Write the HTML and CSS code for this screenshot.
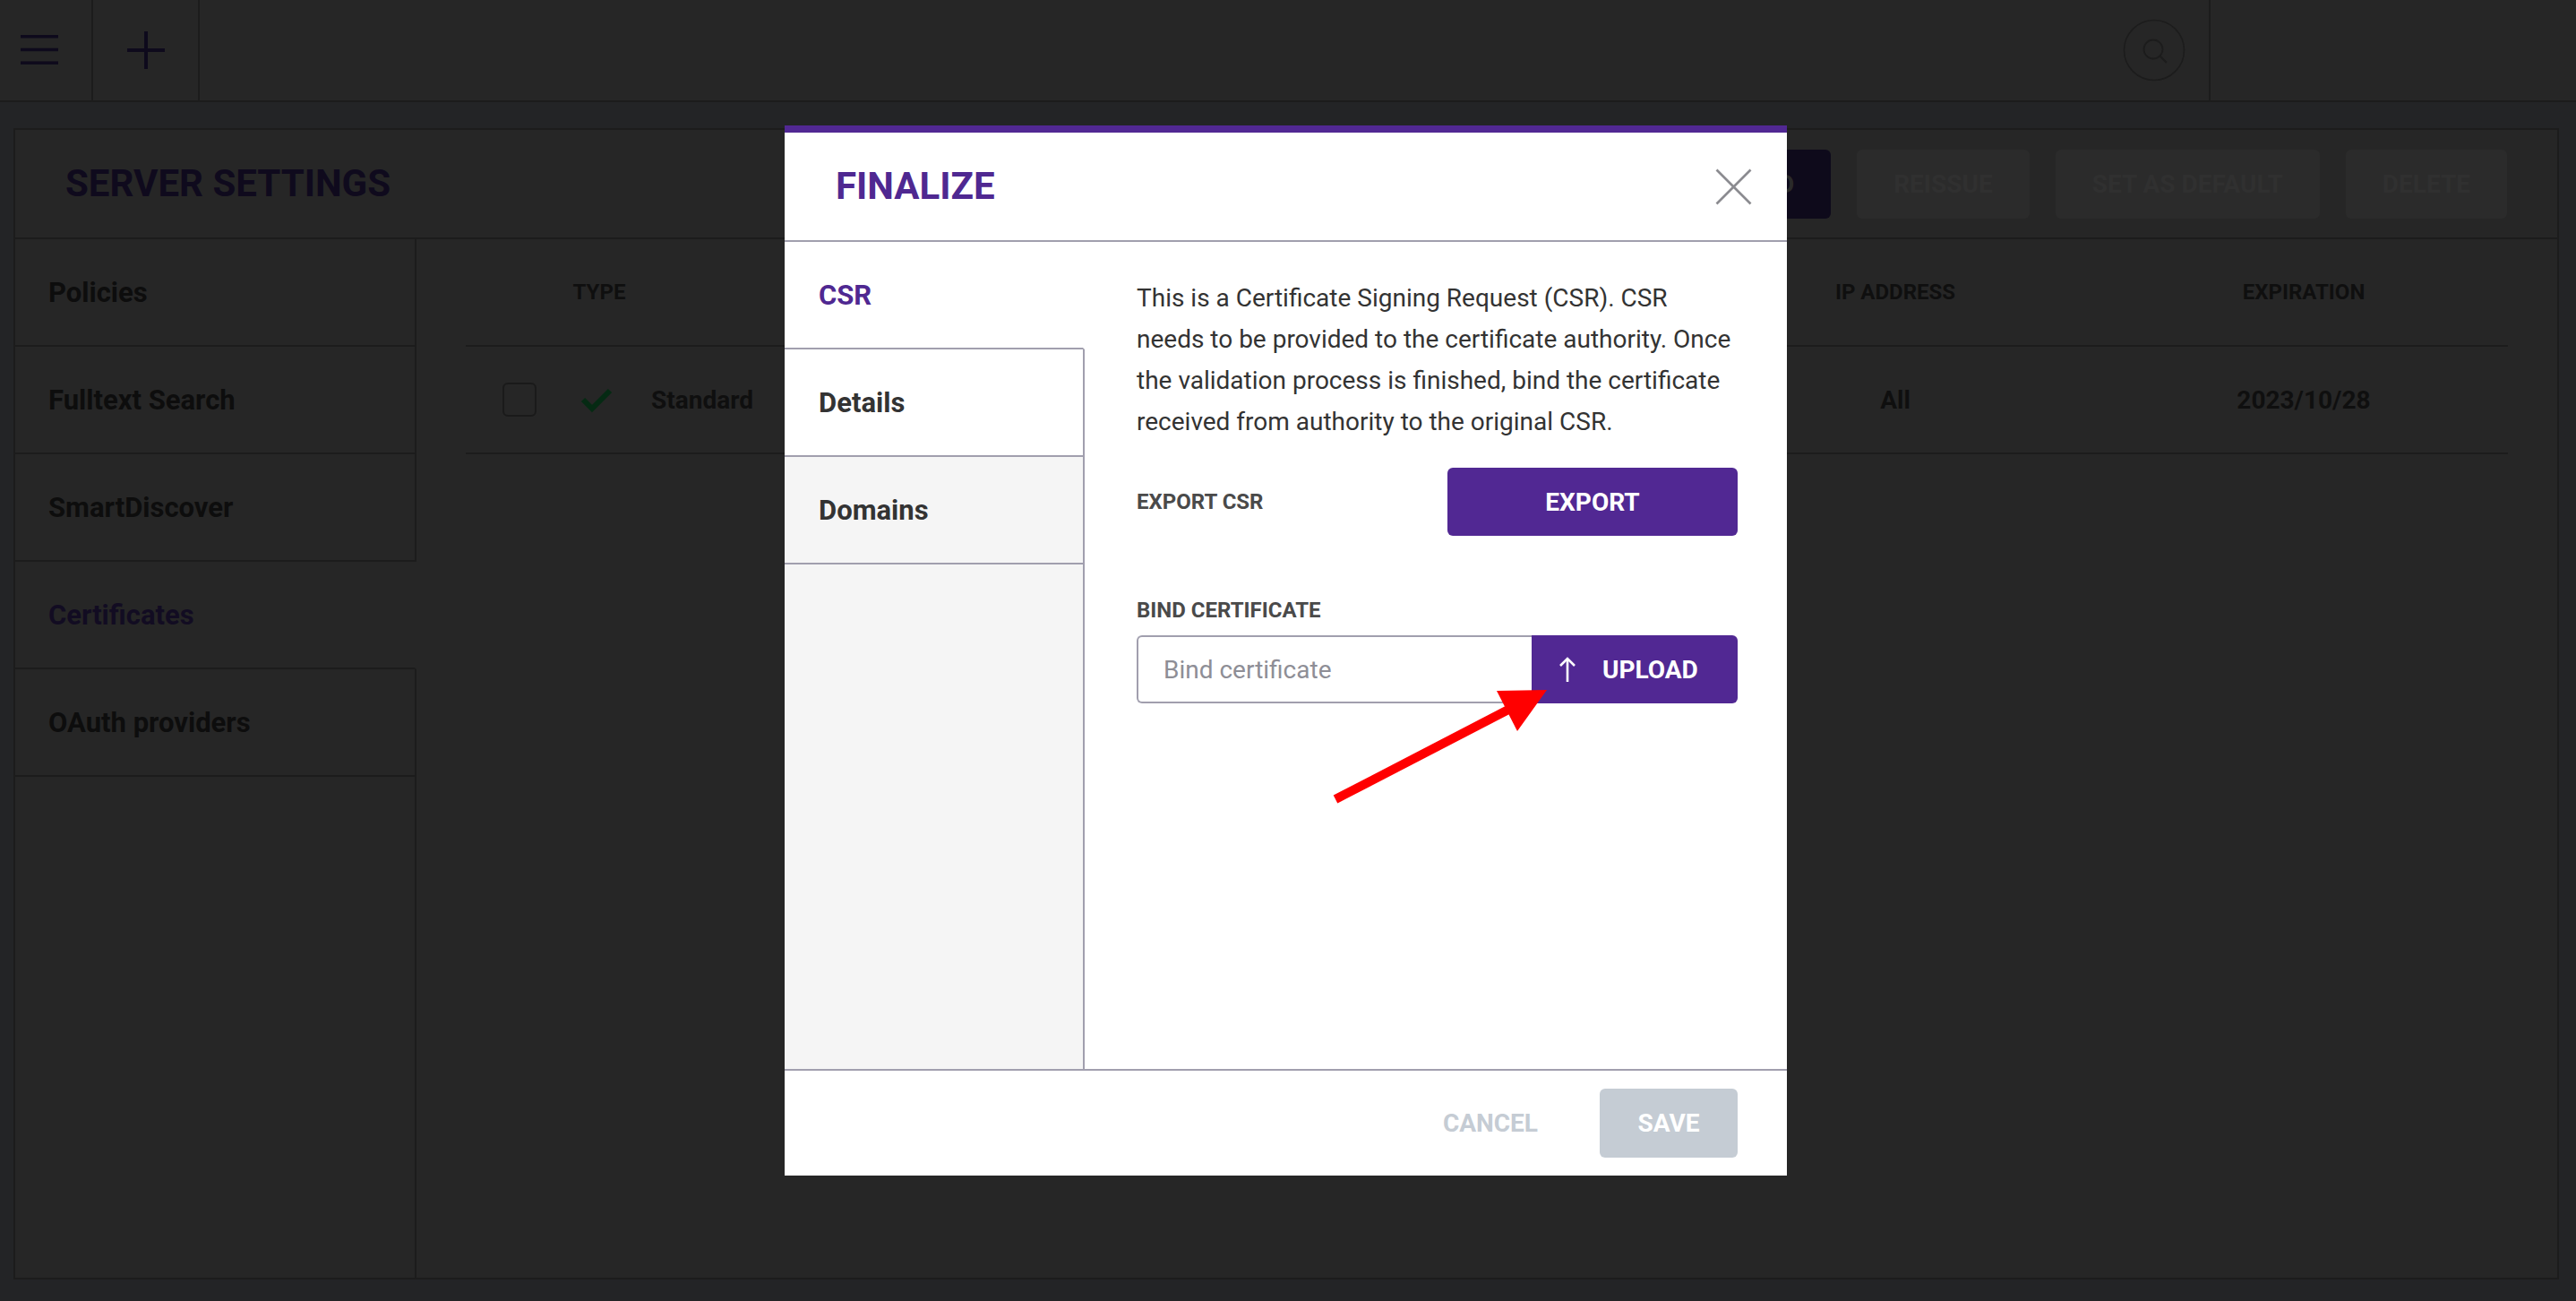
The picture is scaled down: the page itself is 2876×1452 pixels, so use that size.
FILE: index.html
```html
<!DOCTYPE html>
<html lang="en">
<head>
<meta charset="utf-8">
<title>Server Settings - Finalize</title>
<link rel="stylesheet" href="styles.css">
</head>
<body>
<div class="app">
  <header class="topbar">
    <div class="tb-cell tb-menu">
      <svg width="42" height="34" viewBox="0 0 42 34"><rect x="0" y="0" width="42" height="3.5" fill="#0e0a1c"/><rect x="0" y="14.7" width="42" height="3.5" fill="#0e0a1c"/><rect x="0" y="29.4" width="42" height="3.5" fill="#0e0a1c"/></svg>
    </div>
    <div class="tb-cell tb-add">
      <svg width="42" height="42" viewBox="0 0 42 42"><rect x="0" y="19" width="42" height="4" fill="#0e0a1c"/><rect x="19" y="0" width="4" height="42" fill="#0e0a1c"/></svg>
    </div>
    <div class="tb-spacer"></div>
    <div class="tb-cell tb-search">
      <svg width="70" height="70" viewBox="0 0 70 70"><circle cx="35" cy="35" r="33.5" fill="none" stroke="#1c1c1c" stroke-width="1.6"/><circle cx="34" cy="34" r="10.5" fill="none" stroke="#1c1c1c" stroke-width="1.8"/><line x1="41.5" y1="41.5" x2="49" y2="49" stroke="#1c1c1c" stroke-width="2"/></svg>
    </div>
    <div class="tb-right"></div>
  </header>

  <main class="page">
    <section class="panel">
      <div class="panel-head">
        <h1 class="panel-title">SERVER SETTINGS</h1>
        <div class="actions">
          <button class="act act-primary">ADD</button>
          <button class="act">REISSUE</button>
          <button class="act">SET AS DEFAULT</button>
          <button class="act">DELETE</button>
        </div>
      </div>
      <div class="panel-body">
        <nav class="side">
          <div class="side-item">Policies</div>
          <div class="side-item">Fulltext Search</div>
          <div class="side-item">SmartDiscover</div>
          <div class="side-item active">Certificates</div>
          <div class="side-item">OAuth providers</div>
          <div class="side-fill"></div>
        </nav>
        <div class="content">
          <div class="table">
            <div class="trow thead">
              <div class="cell"></div>
              <div class="cell c-center">TYPE</div>
              <div class="cell"></div>
              <div class="cell c-center">IP ADDRESS</div>
              <div class="cell c-center">EXPIRATION</div>
            </div>
            <div class="trow tbody">
              <div class="cell c-box"><span class="checkbox"></span></div>
              <div class="cell c-center">
                <svg class="tick" width="36" height="30" viewBox="0 0 36 30"><polyline points="3,15 13,25 33,5" fill="none" stroke="#052a13" stroke-width="6"/></svg>
              </div>
              <div class="cell c-left">Standard</div>
              <div class="cell c-center">All</div>
              <div class="cell c-center">2023/10/28</div>
            </div>
          </div>
        </div>
      </div>
    </section>
  </main>
</div>

<div class="overlay">
  <div class="modal">
    <div class="modal-head">
      <h2 class="modal-title">FINALIZE</h2>
      <svg class="close" width="41" height="41" viewBox="0 0 41 41"><line x1="1.5" y1="1.5" x2="39.5" y2="39.5" stroke="#8b8b90" stroke-width="2.6"/><line x1="39.5" y1="1.5" x2="1.5" y2="39.5" stroke="#8b8b90" stroke-width="2.6"/></svg>
    </div>
    <div class="modal-body">
      <div class="tabs">
        <div class="tab active">CSR</div>
        <div class="tab">Details</div>
        <div class="tab grey">Domains</div>
        <div class="tab-fill"></div>
      </div>
      <div class="pane">
        <p class="desc">This is a Certificate Signing Request (CSR). CSR<br>needs to be provided to the certificate authority. Once<br>the validation process is finished, bind the certificate<br>received from authority to the original CSR.</p>
        <div class="export-row">
          <span class="label">EXPORT CSR</span>
          <button class="btn-purple btn-export">EXPORT</button>
        </div>
        <div class="label bind-label">BIND CERTIFICATE</div>
        <div class="bind-row">
          <input class="bind-input" type="text" placeholder="Bind certificate" readonly>
          <button class="btn-purple btn-upload">
            <svg width="20" height="30" viewBox="0 0 20 30"><line x1="10" y1="29" x2="10" y2="3" stroke="#fff" stroke-width="2.6"/><polyline points="2,11 10,3 18,11" fill="none" stroke="#fff" stroke-width="2.6"/></svg>
            <span>UPLOAD</span>
          </button>
        </div>
      </div>
    </div>
    <div class="modal-foot">
      <button class="btn-cancel">CANCEL</button>
      <button class="btn-save">SAVE</button>
    </div>
    <svg class="annot" width="1119" height="1172" viewBox="0 0 1119 1172">
      <line x1="615" y1="752" x2="808" y2="652" stroke="#ff0000" stroke-width="10"/>
      <polygon points="795,631 851,630 818,676" fill="#ff0000"/>
    </svg>
  </div>
</div>
</body>
</html>
```

FILE: styles.css
```css
* { box-sizing: border-box; }

html, body {
  margin: 0;
  padding: 0;
}

body {
  width: 2876px;
  height: 1452px;
  overflow: hidden;
  background: #232426;
  font-family: Roboto, "Noto Sans", "Liberation Sans", sans-serif;
}

.app {
  display: flex;
  flex-direction: column;
  height: 100%;
}

/* top bar */
.topbar {
  display: flex;
  height: 114px;
  flex: none;
  background: #262626;
  border-bottom: 2px solid #1c1c1c;
}

.tb-cell {
  display: flex;
  align-items: center;
}

.tb-menu {
  width: 104px;
  padding-left: 23px;
  border-right: 2px solid #1c1c1c;
}

.tb-add {
  width: 119px;
  justify-content: center;
  border-right: 2px solid #1c1c1c;
}

.tb-spacer { flex: 1; }

.tb-search {
  padding-right: 26px;
}

.tb-right {
  width: 410px;
  border-left: 2px solid #1c1c1c;
}

/* page */
.page {
  flex: 1;
  display: flex;
  padding: 29px 19px 24px 15px;
  min-height: 0;
}

.panel {
  flex: 1;
  display: flex;
  flex-direction: column;
  background: #262626;
  border: 2px solid #1c1c1c;
}

.panel-head {
  height: 122px;
  flex: none;
  display: flex;
  align-items: center;
  justify-content: space-between;
  padding: 0 56px;
  border-bottom: 2px solid #1c1c1c;
}

.panel-title {
  margin: 0;
  font-size: 42px;
  font-weight: 700;
  color: #0f0a1d;
  line-height: 1;
}

.actions {
  display: flex;
  gap: 29px;
}

.act {
  height: 77px;
  padding: 0 41px;
  border: none;
  border-radius: 6px;
  background: #2b2b2b;
  color: #303030;
  font-family: inherit;
  font-size: 28px;
  font-weight: 700;
}

.act-primary {
  background: #0e0a1b;
  color: #2a2a2a;
}

.panel-body {
  flex: 1;
  display: flex;
  min-height: 0;
}

.side {
  width: 448px;
  flex: none;
  display: flex;
  flex-direction: column;
}

.side-item {
  height: 120px;
  display: flex;
  align-items: center;
  padding-left: 37px;
  border-bottom: 2px solid #1c1c1c;
  border-right: 2px solid #1c1c1c;
  font-size: 31px;
  font-weight: 700;
  color: #0d0d0d;
}

.side-item.active {
  color: #120c22;
  border-right-color: transparent;
}

.side-fill {
  flex: 1;
  border-right: 2px solid #1c1c1c;
}

.content {
  flex: 1;
  padding: 0 55px;
}

.table {
  display: flex;
  flex-direction: column;
}

.trow {
  display: grid;
  grid-template-columns: 100px 98px 1170px 456px 456px;
  height: 120px;
  border-bottom: 2px solid #1c1c1c;
}

.cell {
  display: flex;
  align-items: center;
  color: #0f0f0f;
  font-weight: 700;
}

.thead .cell { font-size: 24px; }
.tbody .cell { font-size: 28px; }

.c-center { justify-content: center; }
.c-left { padding-left: 9px; }
.c-box { padding-left: 41px; }

.tick { margin-right: 6px; }

.checkbox {
  display: block;
  width: 38px;
  height: 38px;
  border: 2px solid #1a1a1a;
  border-radius: 6px;
}

/* modal */
.overlay {
  position: fixed;
  inset: 0;
  display: flex;
  align-items: center;
  justify-content: center;
}

.modal {
  position: relative;
  width: 1119px;
  height: 1172px;
  margin-right: 5px;
  background: #fff;
  border-top: 8px solid #512893;
  display: flex;
  flex-direction: column;
}

.modal-head {
  height: 122px;
  flex: none;
  display: flex;
  align-items: center;
  justify-content: space-between;
  padding: 0 39px 0 57px;
  border-bottom: 2px solid #a19fae;
}

.modal-title {
  margin: 0;
  font-size: 42px;
  font-weight: 700;
  line-height: 1;
  color: #4f2891;
}

.close { display: block; }

.modal-body {
  flex: 1;
  display: flex;
  min-height: 0;
}

.tabs {
  width: 335px;
  flex: none;
  display: flex;
  flex-direction: column;
}

.tab {
  height: 120px;
  display: flex;
  align-items: center;
  padding-left: 38px;
  border-bottom: 2px solid #a19fae;
  border-right: 2px solid #a19fae;
  font-size: 31px;
  font-weight: 700;
  color: #333;
  background: #fff;
}

.tab.active {
  color: #4f2891;
  border-right-color: transparent;
}

.tab.grey { background: #f5f5f5; }

.tab-fill {
  flex: 1;
  background: #f5f5f5;
  border-right: 2px solid #a19fae;
}

.pane {
  flex: 1;
  padding: 40px 55px 0 58px;
}

.desc {
  margin: 0;
  font-size: 28px;
  line-height: 46px;
  color: #333;
  white-space: nowrap;
}

.export-row {
  margin-top: 28px;
  display: flex;
  align-items: center;
  justify-content: space-between;
}

.label {
  font-size: 24px;
  font-weight: 700;
  line-height: 28px;
  color: #4a4a4a;
}

.btn-purple {
  border: none;
  background: #512893;
  color: #fff;
  font-family: inherit;
  font-size: 28px;
  font-weight: 700;
}

.btn-export {
  width: 324px;
  height: 76px;
  border-radius: 6px;
  padding-top: 2px;
}

.bind-label {
  margin-top: 69px;
}

.bind-row {
  margin-top: 14px;
  display: flex;
  height: 76px;
}

.bind-input {
  flex: 1;
  min-width: 0;
  height: 76px;
  border: 2px solid #a19fae;
  border-right: none;
  border-radius: 6px 0 0 6px;
  padding: 0 0 0 28px;
  font-family: inherit;
  font-size: 28px;
  color: #333;
  outline: none;
}

.bind-input::placeholder { color: #8e8e96; }

.btn-upload {
  width: 230px;
  height: 76px;
  border-radius: 0 6px 6px 0;
  display: flex;
  align-items: center;
  gap: 29px;
  padding: 0 0 0 30px;
}

.btn-upload svg { display: block; }

.modal-foot {
  height: 119px;
  flex: none;
  display: flex;
  align-items: center;
  justify-content: flex-end;
  padding-right: 55px;
  border-top: 2px solid #a19fae;
}

.btn-cancel {
  border: none;
  background: none;
  padding: 0 34px;
  margin-right: 35px;
  height: 77px;
  font-family: inherit;
  font-size: 28px;
  font-weight: 700;
  color: #c5ccd4;
}

.btn-save {
  width: 154px;
  height: 77px;
  border: none;
  border-radius: 6px;
  background: #c5ccd4;
  color: #fff;
  font-family: inherit;
  font-size: 28px;
  font-weight: 700;
}

.annot {
  position: absolute;
  left: 0;
  top: -8px;
  pointer-events: none;
}
```
